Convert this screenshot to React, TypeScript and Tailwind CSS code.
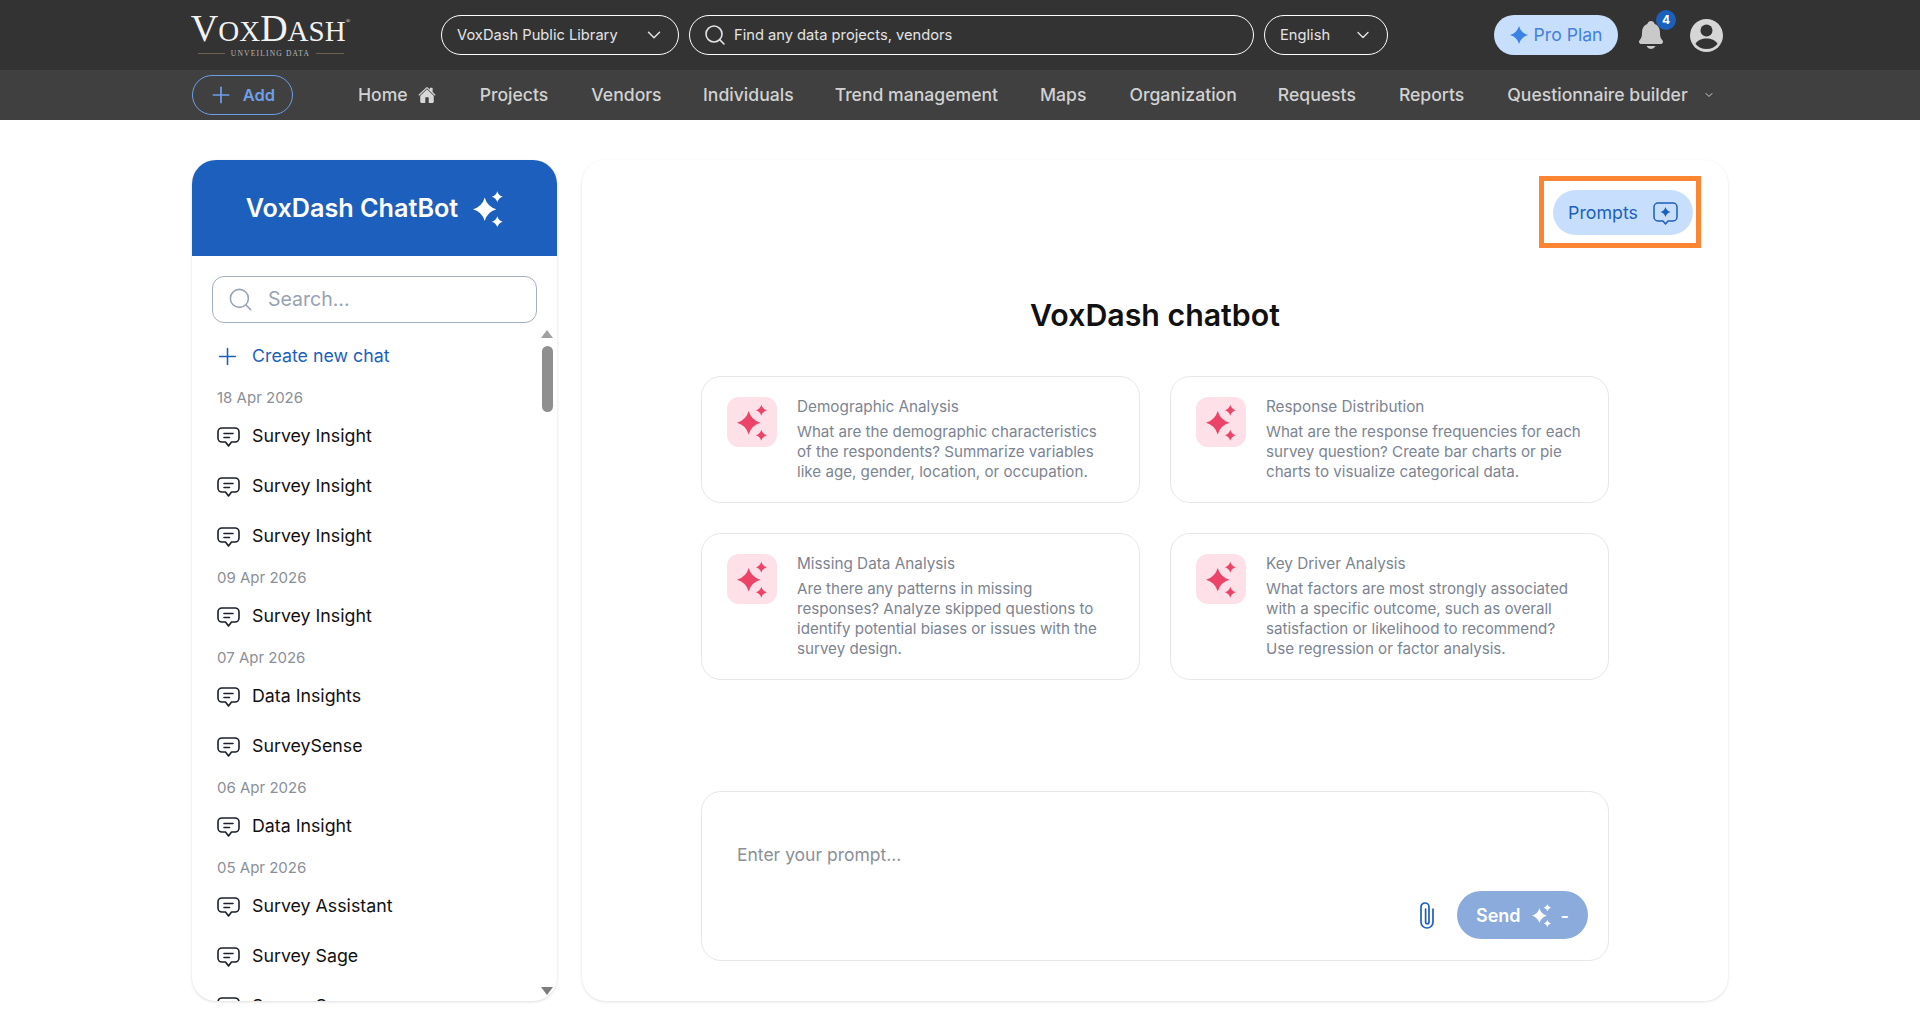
import React from "react";
import { ChevronDown, Search, Plus } from "lucide-react";
import { IoNotifications, IoHome } from "react-icons/io5";

function star(cx: number, cy: number, r: number) {
  const k = r * 0.22;
  return `M${cx} ${cy - r}Q${cx + k} ${cy - k} ${cx + r} ${cy}Q${cx + k} ${cy + k} ${cx} ${cy + r}Q${cx - k} ${cy + k} ${cx - r} ${cy}Q${cx - k} ${cy - k} ${cx} ${cy - r}Z`;
}

function Sparkles({ className }: { className: string }) {
  return (
    <svg viewBox="0 0 30 36" className={className} fill="currentColor">
      <path d={star(11.7, 18.3, 11.7)} />
      <path d={star(24.3, 5.7, 5.5)} />
      <path d={star(24.3, 30.7, 5.5)} />
    </svg>
  );
}

function ChatIcon() {
  return (
    <svg viewBox="0 0 23 20" className="w-[23px] h-[20px] shrink-0" fill="none" stroke="#1a1f29" strokeWidth="1.6" strokeLinejoin="round" strokeLinecap="round">
      <path d="M5 1h13a4 4 0 0 1 4 4v6a4 4 0 0 1-4 4h-3.500l-3 4-3-4H5a4 4 0 0 1-4-4V5a4 4 0 0 1 4-4Z" />
      <path d="M7 6.500h9M7 10.500h5.500" />
    </svg>
  );
}

function PromptIcon() {
  return (
    <svg viewBox="0 0 25 23" className="w-[25px] h-[23px] shrink-0" fill="none" stroke="#1d5fbd" strokeWidth="1.5" strokeLinejoin="round">
      <path d="M5 1h15a4 4 0 0 1 4 4v10a4 4 0 0 1-4 4h-5l-2.500 3-2.500-3H5a4 4 0 0 1-4-4V5a4 4 0 0 1 4-4Z" />
      <path d={star(12.5, 10, 5)} fill="#1d5fbd" stroke="none" />
    </svg>
  );
}

function ClipIcon() {
  return (
    <svg viewBox="0 0 16 28" className="w-[16px] h-[28px] shrink-0" fill="none" stroke="#1d5fbd" strokeWidth="1.7" strokeLinecap="round">
      <path d="M14 8v13a6 6 0 0 1-12 0V6a4 4 0 0 1 8 0v15a1.700 1.700 0 0 1-3.400 0V8" />
    </svg>
  );
}

function UserIcon() {
  return (
    <svg viewBox="0 0 33 33" className="w-[33px] h-[33px]">
      <circle cx="16.5" cy="16.500" r="16.500" fill="#d6d6d6" />
      <circle cx="16.5" cy="11.500" r="6" fill="#333333" />
      <path d="M5.500 25c2-4 6.500-5.500 11-5.500s9 1.500 11 5.500c-2.500 3-6.500 5-11 5s-8.500-2-11-5Z" fill="#333333" />
    </svg>
  );
}

function Logo() {
  return (
    <div className="w-[157px] flex flex-col items-center font-['Liberation_Serif',serif] text-[#f2f2f2]">
      <div className="flex items-baseline h-[32px] leading-[32px] whitespace-nowrap">
        <span className="text-[38px]">V</span>
        <span className="text-[29px]">OX</span>
        <span className="text-[38px]">D</span>
        <span className="text-[29px]">ASH</span>
        <span className="text-[6px] self-start leading-[18px]">®</span>
      </div>
      <div className="flex items-center gap-[6px] mt-[5px] w-[146px]">
        <div className="flex-1 h-px bg-[#6b6250]" />
        <span className="text-[7.500px] leading-[10px] tracking-[1.2px] text-[#b8b8b8] whitespace-nowrap">UNVEILING DATA</span>
        <div className="flex-1 h-px bg-[#6b6250]" />
      </div>
    </div>
  );
}

const navItems: [string, string][] = [
  ["Projects", "ml-[44px]"],
  ["Vendors", "ml-[43px]"],
  ["Individuals", "ml-[41.500px]"],
  ["Trend management", "ml-[41px]"],
  ["Maps", "ml-[42px]"],
  ["Organization", "ml-[43px]"],
  ["Requests", "ml-[41px]"],
  ["Reports", "ml-[43px]"],
  ["Questionnaire builder", "ml-[43px]"],
];

type Entry = { date?: string; title?: string };
const chats: Entry[] = [
  { date: "18 Apr 2026" },
  { title: "Survey Insight" },
  { title: "Survey Insight" },
  { title: "Survey Insight" },
  { date: "09 Apr 2026" },
  { title: "Survey Insight" },
  { date: "07 Apr 2026" },
  { title: "Data Insights" },
  { title: "SurveySense" },
  { date: "06 Apr 2026" },
  { title: "Data Insight" },
  { date: "05 Apr 2026" },
  { title: "Survey Assistant" },
  { title: "Survey Sage" },
  { title: "Survey Sage" },
];

const cards = [
  ["Demographic Analysis", "What are the demographic characteristics of the respondents? Summarize variables like age, gender, location, or occupation."],
  ["Response Distribution", "What are the response frequencies for each survey question? Create bar charts or pie charts to visualize categorical data."],
  ["Missing Data Analysis", "Are there any patterns in missing responses? Analyze skipped questions to identify potential biases or issues with the survey design."],
  ["Key Driver Analysis", "What factors are most strongly associated with a specific outcome, such as overall satisfaction or likelihood to recommend? Use regression or factor analysis."],
];

export default function App() {
  return (
    <div className="h-[1014px] overflow-hidden bg-white font-['Inter',sans-serif]">
      <header className="h-[70px] bg-[#333333] flex items-center pl-[192px]">
        <Logo />
        <button className="ml-[92px] w-[238px] h-[40px] rounded-full border border-white flex items-center justify-between pl-[15px] pr-[13px] text-[14.700px] text-[#e4e4e4]">
          VoxDash Public Library
          <ChevronDown className="w-[22px] h-[22px]" strokeWidth={1.6} />
        </button>
        <div className="ml-[10px] w-[565px] h-[40px] rounded-full border border-white flex items-center pl-[13px] text-[14.700px] text-[#e4e4e4]">
          <Search className="w-[24px] h-[24px] mr-[7px]" strokeWidth={1.6} />
          Find any data projects, vendors
        </div>
        <button className="ml-[10px] w-[124px] h-[40px] rounded-full border border-white flex items-center justify-between pl-[15px] pr-[14px] text-[14.700px] text-[#e4e4e4]">
          English
          <ChevronDown className="w-[20px] h-[20px]" strokeWidth={1.6} />
        </button>
        <button className="ml-[106px] w-[124px] h-[40px] rounded-full bg-[#c7dffd] flex items-center justify-center gap-[6px] text-[17.600px] text-[#4480de]">
          <svg viewBox="0 0 18 18" className="w-[18px] h-[18px]" fill="#3b82e6"><path d={star(9, 9, 9)} /></svg>
          Pro Plan
        </button>
        <div className="relative ml-[17px] w-[32px] h-[32px] flex items-center justify-center">
          <IoNotifications className="w-[32px] h-[32px] text-[#c9c9c9]" />
          <span className="absolute -top-[9px] -right-[9px] w-[20px] h-[20px] rounded-full bg-[#1d5fbd] text-white text-[12px] font-bold flex items-center justify-center">4</span>
        </div>
        <div className="ml-[23px]"><UserIcon /></div>
      </header>

      <nav className="h-[50px] bg-[#404040] flex items-center pl-[192px] text-[17.600px] font-medium text-[#d2d2d2] whitespace-nowrap">
        <button className="w-[101px] h-[40px] rounded-full border border-[#6d9fe8] flex items-center justify-center gap-[9px] pr-[2px] text-[16.500px] text-[#6d9fe8] font-semibold">
          <Plus className="w-[26px] h-[26px]" strokeWidth={1.6} />
          Add
        </button>
        <span className="ml-[65px]">Home</span>
        <IoHome className="ml-[10px] w-[18px] h-[18px] text-[#d8d8d8]" />
        {navItems.map(([label, margin]) => (
          <span key={label} className={margin}>{label}</span>
        ))}
        <ChevronDown className="ml-[15px] w-[12px] h-[12px]" />
      </nav>

      <main className="flex pl-[192px] pt-[40px] gap-[25px]">
        <aside className="relative w-[365px] h-[841px] rounded-[24px] bg-white overflow-hidden shadow-[0_1px_3px_rgba(0,0,0,0.14)] flex flex-col">
          <div className="h-[96px] shrink-0 bg-[#1d5fbd] flex items-center justify-center gap-[15px] pt-[1px] text-white text-[25.200px] font-semibold">
            VoxDash ChatBot
            <Sparkles className="w-[30px] h-[36px]" />
          </div>
          <div className="mx-[20px] mt-[20px] h-[47px] shrink-0 rounded-[12px] border border-[#a3afc2] flex items-center pl-[14px] text-[19.500px] text-[#98a2b3]">
            <Search className="w-[27px] h-[27px] mr-[14px]" strokeWidth={1.4} />
            <span className="pt-[1px]">Search...</span>
          </div>
          <div className="pl-[25px] pt-[15px] flex flex-col">
            <div className="h-[36px] mb-[8px] shrink-0 flex items-center gap-[11px] -ml-[3px] text-[#1d5fbd] text-[17.800px]">
              <Plus className="w-[27px] h-[27px]" strokeWidth={1.4} />
              Create new chat
            </div>
            {chats.map((c, i) =>
              c.date ? (
                <div key={i} className="h-[27px] mt-[3px] shrink-0 flex items-center text-[15px] text-[#8b9098]">{c.date}</div>
              ) : (
                <div key={i} className="h-[50px] shrink-0 flex items-center gap-[12px] text-[17.800px] text-[#111111]">
                  <ChatIcon />
                  <span className="pb-[2px]">{c.title}</span>
                </div>
              )
            )}
          </div>
          <div className="absolute left-[349px] top-[170px] w-0 h-0 border-l-[6px] border-r-[6px] border-b-[8px] border-l-transparent border-r-transparent border-b-[#a0a0a0]" />
          <div className="absolute left-[350px] top-[186px] w-[11px] h-[66px] rounded-full bg-[#8f8f8f]" />
          <div className="absolute left-[349px] top-[827px] w-0 h-0 border-l-[6px] border-r-[6px] border-t-[8px] border-l-transparent border-r-transparent border-t-[#7c7c7c]" />
        </aside>

        <section className="w-[1146px] h-[841px] rounded-[24px] bg-white shadow-[0_1px_3px_rgba(0,0,0,0.12)] flex flex-col items-center">
          <div className="self-end mr-[27px] mt-[16px] w-[162px] h-[72px] border-[5px] border-[#fb8530] flex items-start pl-[9px] pt-[9px]">
            <button className="w-[140px] h-[45px] pt-[2px] rounded-full bg-[#c7dffd] flex items-center justify-center gap-[15px] text-[#1d5fbd] text-[17.800px]">
              Prompts
              <PromptIcon />
            </button>
          </div>
          <h1 className="mt-[47px] h-[40px] leading-[40px] text-[30.300px] font-semibold text-[#111111]">VoxDash chatbot</h1>
          <div className="mt-[41px] w-[908px] grid grid-cols-2 gap-[30px]">
            {cards.map(([title, body]) => (
              <div key={title} className="rounded-[20px] border border-[#e5e7eb] pl-[25px] pr-[26px] pt-[20px] pb-[20px] flex gap-[20px] items-start">
                <div className="w-[50px] h-[50px] shrink-0 rounded-[12px] bg-[#fde0e8] flex items-center justify-center text-[#ec4468]">
                  <Sparkles className="w-[30px] h-[37px]" />
                </div>
                <div className="flex-1 text-[#7c8491] text-[15.150px] leading-[20px]">
                  <div className="text-[15.300px] mb-[5px]">{title}</div>
                  <div>{body}</div>
                </div>
              </div>
            ))}
          </div>
          <div className="mt-[111px] w-[908px] h-[170px] rounded-[20px] border border-[#e5e7eb] flex flex-col pt-[50px] pl-[35px] pr-[20px]">
            <div className="h-[26px] leading-[26px] text-[17.500px] text-[#8b9098]">Enter your prompt...</div>
            <div className="mt-[23px] flex items-center justify-end">
              <div className="mr-[22px]"><ClipIcon /></div>
              <button className="w-[131px] h-[48px] rounded-full bg-[#8aabdc] flex items-center justify-center gap-[11px] text-white text-[18px] font-semibold">
                Send
                <Sparkles className="w-[19px] h-[23px]" />
                <span className="-ml-[1px]">-</span>
              </button>
            </div>
          </div>
        </section>
      </main>
    </div>
  );
}
